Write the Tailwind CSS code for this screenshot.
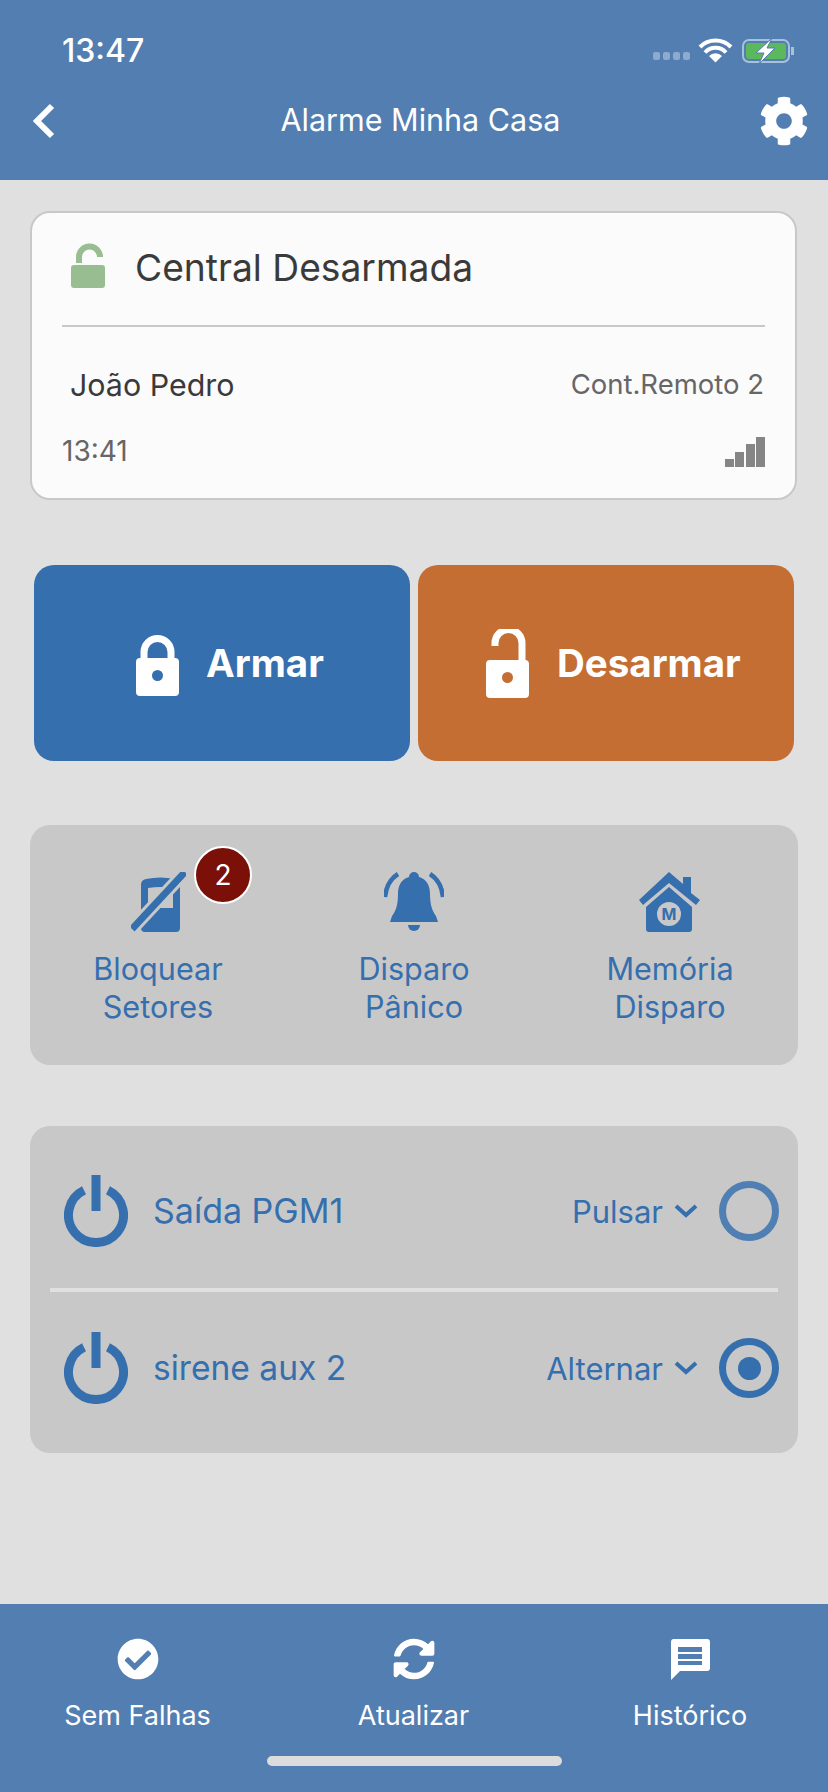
<!DOCTYPE html>
<html lang="pt">
<head>
    <meta charset="UTF-8">
    <meta name="viewport" content="width=device-width, initial-scale=1.0">
    <title>Alarme Minha Casa</title>
    <script src="https://cdn.jsdelivr.net/npm/@tailwindcss/browser@4"></script>
</head>
<body class="bg-[#e0e0e0] font-[Inter,sans-serif]">
    <div class="flex flex-col w-[828px] h-[1792px] overflow-hidden">
        <!-- Header -->
        <header class="h-[180px] shrink-0 bg-[#527eb1] text-white">
            <div class="h-[96px] pt-[6px] pl-[62px] pr-[33px] flex items-center justify-between">
                <span class="text-[32px] font-medium leading-none">13:47</span>
                <svg class="w-[142px] h-[26px]" viewBox="0 0 142 26">
                    <g fill="#8cabcd">
                        <rect x="0" y="14" width="7" height="8" rx="2"/>
                        <rect x="10" y="14" width="7" height="8" rx="2"/>
                        <rect x="20" y="14" width="7" height="8" rx="2"/>
                        <rect x="30" y="14" width="7" height="8" rx="2"/>
                    </g>
                    <g fill="none" stroke="#fff" stroke-width="4">
                        <path d="M47 9a22 22 0 0 1 31 0"/>
                        <path d="M52 14.500a14 14 0 0 1 21 0"/>
                    </g>
                    <path d="M56 18a9 9 0 0 1 13 0l-6.500 6.500z" fill="#fff"/>
                    <rect x="90" y="2" width="46" height="22" rx="6" fill="none" stroke="#a9c0da" stroke-width="2"/>
                    <rect x="93" y="5" width="40" height="16" rx="3" fill="#5cb85c"/>
                    <path d="M138 9h3v8h-3z" fill="#a9c0da"/>
                    <path d="M119 0l-16 15h8l-5 11 16-16h-8z" fill="#fff" stroke="#527eb1" stroke-width="1"/>
                </svg>
            </div>
            <div class="h-[48px] pl-[32px] pr-[19px] grid grid-cols-[1fr_auto_1fr] items-center">
                <svg class="w-[24px] h-[36px]" viewBox="0 0 24 36">
                    <path d="M20 3L5 18l15 15" fill="none" stroke="#fff" stroke-width="6"/>
                </svg>
                <span class="text-[30.5px] leading-none mt-[-2px]">Alarme Minha Casa</span>
                <svg class="w-[50px] h-[50px] justify-self-end" viewBox="0 0 512 512" fill="#fff">
                    <path d="M487.4 315.7l-42.6-24.6c4.3-23.2 4.3-47 0-70.2l42.6-24.6c4.9-2.8 7.1-8.6 5.5-14-11.1-35.6-30-67.8-54.7-94.6-3.8-4.1-10-5.1-14.8-2.3L380.8 110c-17.9-15.4-38.5-27.3-60.8-35.1V25.8c0-5.6-3.9-10.5-9.4-11.7-36.7-8.2-74.3-7.8-109.2 0-5.5 1.2-9.4 6.1-9.4 11.7V75c-22.2 7.9-42.8 19.8-60.8 35.1L88.7 85.500c-4.9-2.8-11-1.9-14.8 2.3-24.7 26.7-43.6 58.9-54.7 94.6-1.7 5.4.6 11.2 5.5 14L67.3 221c-4.3 23.2-4.3 47 0 70.2l-42.6 24.6c-4.9 2.8-7.1 8.6-5.5 14 11.1 35.6 30 67.8 54.7 94.6 3.8 4.1 10 5.1 14.8 2.3l42.6-24.6c17.9 15.4 38.5 27.3 60.8 35.1v49.2c0 5.6 3.9 10.5 9.4 11.7 36.7 8.2 74.3 7.8 109.2 0 5.5-1.2 9.4-6.1 9.4-11.7v-49.2c22.2-7.9 42.8-19.8 60.8-35.1l42.6 24.6c4.9 2.8 11 1.9 14.8-2.3 24.7-26.7 43.6-58.9 54.7-94.6 1.5-5.5-.7-11.3-5.6-14.1zM256 336c-44.1 0-80-35.9-80-80s35.9-80 80-80 80 35.9 80 80-35.9 80-80 80z"/>
                </svg>
            </div>
        </header>

        <main class="flex-1 px-[30px] pt-[31px]">
            <!-- Status card -->
            <section class="h-[289px] w-[767px] bg-[#fbfbfb] border-2 border-[#c8c8c8] rounded-[20px] px-[30px]">
                <div class="h-[112px] flex items-center pl-[9px]">
                    <svg class="w-[34px] h-[45px] mt-[-8px]" viewBox="0 0 34 45">
                        <path d="M8 20v-6a10.500 10.500 0 0 1 21 0" fill="none" stroke="#98bd90" stroke-width="6"/>
                        <rect x="0" y="22" width="34" height="23" rx="3" fill="#98bd90"/>
                    </svg>
                    <span class="ml-[30px] text-[37.2px] leading-none text-[#3a3a3a] mt-[-2px]">Central Desarmada</span>
                </div>
                <div class="h-[2px] bg-[#c8c8c8]"></div>
                <div class="flex items-center justify-between h-[116px] pl-[8px] pr-[1px]">
                    <span class="text-[30.4px] leading-none text-[#3a3a3a]">João Pedro</span>
                    <span class="text-[27.5px] leading-none text-[#666666]">Cont.Remoto 2</span>
                </div>
                <div class="flex items-end justify-between h-[18px]">
                    <span class="text-[28px] leading-none text-[#666666] mb-[-4px]">13:41</span>
                    <svg class="w-[40px] h-[30px] mb-[-6px]" viewBox="0 0 40 30" fill="#858585">
                        <rect x="0" y="22" width="9" height="8"/>
                        <rect x="10" y="15" width="9" height="15"/>
                        <rect x="21" y="7" width="9" height="23"/>
                        <rect x="31" y="0" width="9" height="30"/>
                    </svg>
                </div>
            </section>

            <!-- Arm / disarm -->
            <div class="mt-[65px] mx-[4px] grid grid-cols-2 gap-[8px] h-[196px]">
                <button class="bg-[#356fae] rounded-[20px] flex items-center pl-[102px] gap-[27px] text-white">
                    <svg class="w-[43px] h-[63px] mt-[3px]" viewBox="0 0 43 63">
                        <path d="M8 30V19a13.500 13.500 0 0 1 27 0v11" fill="none" stroke="#fff" stroke-width="7"/>
                        <path fill-rule="evenodd" d="M4 25h35a4 4 0 0 1 4 4v30a4 4 0 0 1-4 4H4a4 4 0 0 1-4-4V29a4 4 0 0 1 4-4zM21.500 37a5.500 5.500 0 1 0 0 11 5.500 5.500 0 0 0 0-11z" fill="#fff"/>
                    </svg>
                    <span class="text-[38.5px] font-bold leading-none">Armar</span>
                </button>
                <button class="bg-[#c46e33] rounded-[20px] flex items-center pl-[68px] gap-[28px] text-white">
                    <svg class="w-[43px] h-[69px]" viewBox="0 0 43 69">
                        <path d="M9 17v-3a13.500 13.500 0 0 1 27 0v22" fill="none" stroke="#fff" stroke-width="7"/>
                        <path fill-rule="evenodd" d="M4 31h35a4 4 0 0 1 4 4v30a4 4 0 0 1-4 4H4a4 4 0 0 1-4-4V35a4 4 0 0 1 4-4zM21.500 43a5.500 5.500 0 1 0 0 11 5.500 5.500 0 0 0 0-11z" fill="#fff"/>
                    </svg>
                    <span class="text-[38.5px] font-bold leading-none">Desarmar</span>
                </button>
            </div>

            <!-- Shortcuts -->
            <section class="mt-[64px] h-[240px] bg-[#c8c8c8] rounded-[20px] grid grid-cols-3 pt-[47px] text-[#356fae] text-[30.6px] leading-[38px] text-center">
                <div class="relative flex flex-col items-center">
                    <svg class="w-[55px] h-[60px] mb-[18px]" viewBox="0 0 55 60">
                        <path fill-rule="evenodd" d="M10 13a6 6 0 0 1 5-6q14-3 29 0a6 6 0 0 1 5 6v43a4 4 0 0 1-4 4H14a4 4 0 0 1-4-4zM17 16v20h25V16q-12-2-25 0z" fill="#356fae"/>
                        <path d="M1 57L54 0" stroke="#c8c8c8" stroke-width="13"/>
                        <path d="M1 57L54 0" stroke="#356fae" stroke-width="7"/>
                    </svg>
                    <span>Bloquear<br>Setores</span>
                    <div class="absolute top-[-26px] left-[164px] w-[58px] h-[58px] rounded-full bg-[#7a1008] border-2 border-white text-white text-[28px] leading-none flex items-center justify-center">2</div>
                </div>
                <div class="flex flex-col items-center">
                    <svg class="w-[60px] h-[60px] mb-[18px]" viewBox="0 0 60 60" fill="#356fae">
                        <path d="M30 0a5 5 0 0 1 5 5c8 2 11 9 11 17 0 10 2 17 6 22l2 6H6l2-6c4-5 6-12 6-22 0-8 3-15 11-17a5 5 0 0 1 5-5z"/>
                        <path d="M24 53h12a6 6 0 0 1-12 0z"/>
                        <path d="M14 2C6 7 2 15 1 25M46 2c8 5 12 13 13 23" fill="none" stroke="#356fae" stroke-width="4.500"/>
                    </svg>
                    <span>Disparo<br>Pânico</span>
                </div>
                <div class="flex flex-col items-center">
                    <svg class="w-[62px] h-[60px] mb-[18px]" viewBox="0 0 62 60" fill="#356fae">
                        <path d="M30 0L44 12V5h8v16l9 7-4 5L30 11 4 33l-4-5z"/>
                        <path fill-rule="evenodd" d="M30 15l23 20v22a3 3 0 0 1-3 3H10a3 3 0 0 1-3-3V35zM30 30a12 12 0 1 0 0 24 12 12 0 0 0 0-24z"/>
                        <text x="30" y="48" text-anchor="middle" font-size="16" font-weight="700" font-family="Inter, sans-serif">M</text>
                    </svg>
                    <span>Memória<br>Disparo</span>
                </div>
            </section>

            <!-- Outputs -->
            <section class="mt-[61px] h-[327px] bg-[#c8c8c8] rounded-[20px] pt-[8px] text-[#356fae]">
                <div class="h-[154px] flex items-center pl-[34px] pr-[19px]">
                    <svg class="w-[64px] h-[72px]" viewBox="0 0 64 72">
                        <path d="M20 15.300a27.500 27.500 0 1 0 24 0" fill="none" stroke="#356fae" stroke-width="9"/>
                        <rect x="27.500" y="0" width="9" height="36" fill="#356fae"/>
                    </svg>
                    <span class="ml-[25px] text-[34px] leading-none flex-1">Saída PGM1</span>
                    <span class="text-[31px] leading-none">Pulsar</span>
                    <svg class="w-[24px] h-[14px] ml-[11px]" viewBox="0 0 24 14">
                        <path d="M2 2l10 9 10-9" fill="none" stroke="#356fae" stroke-width="4"/>
                    </svg>
                    <div class="w-[60px] h-[60px] ml-[21px] rounded-full border-[7px] border-[#4f7fb3]"></div>
                </div>
                <div class="h-[4px] mx-[20px] bg-[#e0e0e0]"></div>
                <div class="h-[152px] flex items-center pl-[34px] pr-[19px]">
                    <svg class="w-[64px] h-[72px]" viewBox="0 0 64 72">
                        <path d="M20 15.300a27.500 27.500 0 1 0 24 0" fill="none" stroke="#356fae" stroke-width="9"/>
                        <rect x="27.500" y="0" width="9" height="36" fill="#356fae"/>
                    </svg>
                    <span class="ml-[25px] text-[33.6px] leading-none flex-1">sirene aux 2</span>
                    <span class="text-[31px] leading-none">Alternar</span>
                    <svg class="w-[24px] h-[14px] ml-[11px]" viewBox="0 0 24 14">
                        <path d="M2 2l10 9 10-9" fill="none" stroke="#356fae" stroke-width="4"/>
                    </svg>
                    <div class="w-[60px] h-[60px] ml-[21px] rounded-full border-[7px] border-[#356fae] flex items-center justify-center">
                        <div class="w-[23px] h-[23px] rounded-full bg-[#356fae]"></div>
                    </div>
                </div>
            </section>
        </main>

        <!-- Footer -->
        <footer class="h-[188px] shrink-0 bg-[#527eb1] text-white pt-[34px]">
            <div class="grid grid-cols-[275px_277px_276px] text-center text-[27px] leading-none">
                <div class="flex flex-col items-center gap-[22px]">
                    <svg class="w-[42px] h-[42px]" viewBox="0 0 512 512" fill="#fff">
                        <path d="M504 256c0 136.967-111.033 248-248 248S8 392.967 8 256 119.033 8 256 8s248 111.033 248 248zM227.314 387.314l184-184c6.248-6.248 6.248-16.379 0-22.627l-22.627-22.627c-6.248-6.249-16.379-6.249-22.628 0L216 308.118l-70.059-70.059c-6.248-6.248-16.379-6.248-22.628 0l-22.627 22.627c-6.248 6.248-6.248 16.379 0 22.627l104 104c6.249 6.249 16.379 6.249 22.628.001z"/>
                    </svg>
                    <span>Sem Falhas</span>
                </div>
                <div class="flex flex-col items-center gap-[22px]">
                    <svg class="w-[42px] h-[42px]" viewBox="0 0 512 512" fill="#fff">
                        <path d="M370.72 133.28C339.458 104.008 298.888 87.962 255.848 88c-77.458.068-144.328 53.178-162.791 126.85-1.344 5.363-6.122 9.15-11.651 9.15H24.103c-7.498 0-13.194-6.807-11.807-14.176C33.933 94.924 134.813 8 256 8c66.448 0 126.791 26.136 171.315 68.685L463.03 40.97C478.149 25.851 504 36.559 504 57.941V192c0 13.255-10.745 24-24 24H345.941c-21.382 0-32.09-25.851-16.971-40.971l41.75-41.749zM32 296h134.059c21.382 0 32.09 25.851 16.971 40.971l-41.75 41.75c31.262 29.273 71.835 45.319 114.876 45.28 77.418-.07 144.315-53.144 162.787-126.849 1.344-5.363 6.122-9.15 11.651-9.15h57.304c7.498 0 13.194 6.807 11.807 14.176C478.067 417.076 377.187 504 256 504c-66.448 0-126.791-26.136-171.315-68.685L48.97 471.03C33.851 486.149 8 475.441 8 454.059V320c0-13.255 10.745-24 24-24z"/>
                    </svg>
                    <span>Atualizar</span>
                </div>
                <div class="flex flex-col items-center gap-[22px]">
                    <svg class="w-[42px] h-[42px]" viewBox="0 0 42 42">
                        <path fill-rule="evenodd" d="M4 1h34a3 3 0 0 1 3 3v26a3 3 0 0 1-3 3H11L2 42V4a3 3 0 0 1 2-3zM9 9v5h24V9zM9 16v5h24v-5zM9 23v4h24v-4z" fill="#fff"/>
                    </svg>
                    <span>Histórico</span>
                </div>
            </div>
            <div class="mt-[27px] mx-auto w-[295px] h-[10px] rounded-full bg-[#dcdcdc]"></div>
        </footer>
    </div>
</body>
</html>
